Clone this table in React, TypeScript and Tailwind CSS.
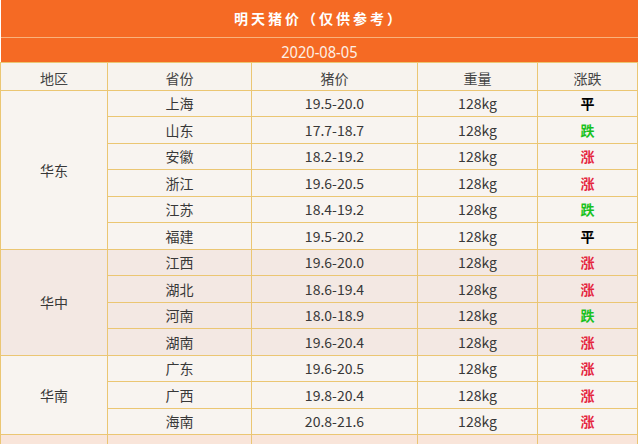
const ROWS = [
  { region: "华东", span: 6, province: "上海", price: "19.5-20.0", trend: "平" },
  { province: "山东", price: "17.7-18.7", trend: "跌" },
  { province: "安徽", price: "18.2-19.2", trend: "涨" },
  { province: "浙江", price: "19.6-20.5", trend: "涨" },
  { province: "江苏", price: "18.4-19.2", trend: "跌" },
  { province: "福建", price: "19.5-20.2", trend: "平" },
  { region: "华中", span: 4, province: "江西", price: "19.6-20.0", trend: "涨" },
  { province: "湖北", price: "18.6-19.4", trend: "涨" },
  { province: "河南", price: "18.0-18.9", trend: "跌" },
  { province: "湖南", price: "19.6-20.4", trend: "涨" },
  { region: "华南", span: 3, province: "广东", price: "19.6-20.5", trend: "涨" },
  { province: "广西", price: "19.8-20.4", trend: "涨" },
  { province: "海南", price: "20.8-21.6", trend: "涨" },
];

const trendClass = (t: string) =>
  t === "涨" ? "text-[#e5263f]" : t === "跌" ? "text-[#19c21e]" : "text-black";

// group backgrounds: 华东 cream, 华中 pinkish, 华南 cream
const groupBg = (i: number) => (i >= 6 && i < 10 ? "bg-[#f3e8e3]" : "bg-[#f8f4f0]");

export default function App() {
  return (
    <div className="w-[640px] h-[444px] overflow-hidden bg-white font-['Noto_Sans_CJK_SC','Noto_Sans',sans-serif]">
      <table className="w-[637px] border-collapse table-fixed text-[14px] text-[#383838]">
        <colgroup>
          <col className="w-[107px]" />
          <col className="w-[144px]" />
          <col className="w-[166px]" />
          <col className="w-[120px]" />
          <col className="w-[100px]" />
        </colgroup>
        <tbody>
          <tr className="h-[37px] bg-[#f56a24] border-b border-[#f9b27c]">
            <td colSpan={5} className="text-center text-white font-bold text-[14px] tracking-[3px] leading-none">
              明天猪价（仅供参考）
            </td>
          </tr>
          <tr className="h-[25px] bg-[#f56a24]">
            <td colSpan={5} className="text-center leading-none pt-[3px]">
              <span className="inline-block scale-x-[0.86] text-[#fdf0e6] text-[17px] font-['Noto_Sans',sans-serif] font-normal">
                2020-08-05
              </span>
            </td>
          </tr>
          <tr className="h-[28px] bg-[#f7f3ee]">
            {["地区", "省份", "猪价", "重量", "涨跌"].map((h) => (
              <td key={h} className="border border-[#ebc673] text-center leading-none pt-[3px] text-[#444]">
                {h}
              </td>
            ))}
          </tr>
          {ROWS.map((r, i) => (
            <tr key={r.province} className={`h-[26.5px] ${groupBg(i)}`}>
              {r.region && (
                <td rowSpan={r.span} className="border border-[#ebc673] text-center leading-none">
                  {r.region}
                </td>
              )}
              <td className="border border-[#ebc673] text-center leading-none">{r.province}</td>
              <td className="border border-[#ebc673] text-center leading-none">{r.price}</td>
              <td className="border border-[#ebc673] text-center leading-none">128kg</td>
              <td className={`border border-[#ebc673] text-center leading-none font-bold ${trendClass(r.trend)}`}>
                {r.trend}
              </td>
            </tr>
          ))}
          <tr className="h-[26px] bg-[#f9e5da]">
            <td className="border border-[#ebc673]" />
            <td className="border border-[#ebc673]" />
            <td className="border border-[#ebc673]" />
            <td className="border border-[#ebc673]" />
            <td className="border border-[#ebc673]" />
          </tr>
        </tbody>
      </table>
    </div>
  );
}
